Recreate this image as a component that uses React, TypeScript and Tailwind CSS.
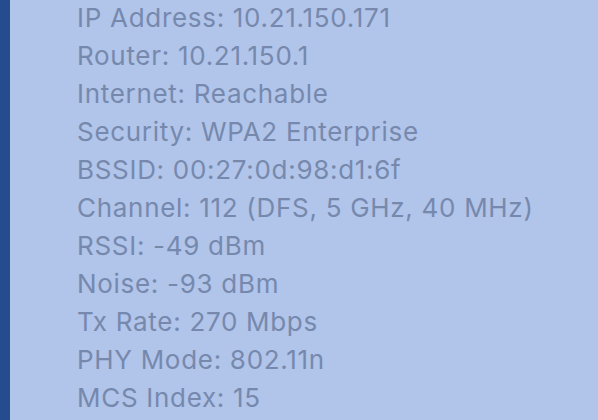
const rows = [
  'IP Address: 10.21.150.171',
  'Router: 10.21.150.1',
  'Internet: Reachable',
  'Security: WPA2 Enterprise',
  'BSSID: 00:27:0d:98:d1:6f',
  'Channel: 112 (DFS, 5 GHz, 40 MHz)',
  'RSSI: -49 dBm',
  'Noise: -93 dBm',
  'Tx Rate: 270 Mbps',
  'PHY Mode: 802.11n',
  'MCS Index: 15',
];

export default function App() {
  return (
    <div className="flex h-[420px] w-[598px] overflow-hidden bg-[#b1c4ea]">
      <div className="w-[10px] shrink-0 bg-[#244c8e]" />
      <ul
        className="-mt-px flex flex-col pl-[67px] text-[26px] leading-[38px] tracking-[0.7px] text-[#7689ad]"
        style={{ fontFamily: 'Inter, "Liberation Sans", sans-serif' }}
      >
        {rows.map((r) => (
          <li key={r} className="whitespace-nowrap">
            {r}
          </li>
        ))}
      </ul>
    </div>
  );
}
